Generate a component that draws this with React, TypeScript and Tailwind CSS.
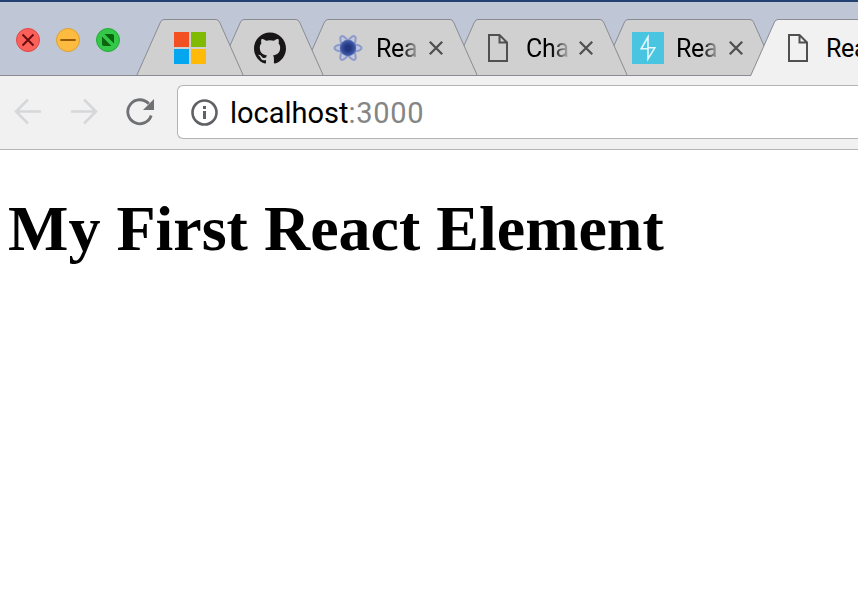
import type { ReactNode } from "react";
import { SiGithub } from "react-icons/si";

function TrafficLights() {
  return (
    <div className="flex gap-4 pl-4 pt-[26px]">
      <svg className="size-6" viewBox="0 0 24 24">
        <circle cx="12" cy="12" r="11.5" fill="#fc605b" stroke="#df4744" />
        <path d="M6.5 6.5l11 11M17.5 6.5l-11 11" stroke="#6b0d0a" strokeWidth="2" />
      </svg>
      <svg className="size-6" viewBox="0 0 24 24">
        <circle cx="12" cy="12" r="11.5" fill="#fdbc40" stroke="#de9f34" />
        <path d="M4.3 12h15.4" stroke="#985a08" strokeWidth="2" />
      </svg>
      <svg className="size-6" viewBox="0 0 24 24">
        <circle cx="12" cy="12" r="11.5" fill="#33c84a" stroke="#27aa35" />
        <path d="M8.500 6H16a2 2 0 0 1 2 2v7.500zM6 8.500V16a2 2 0 0 0 2 2h7.500z" fill="#0a650d" />
      </svg>
    </div>
  );
}

function TabShape({ width, active = false }: { width: number; active?: boolean }) {
  const w = width;
  return (
    <svg className="absolute inset-0 h-[57px] w-full" viewBox={`0 0 ${w} 57`}>
      <path
        d={`M0.500 57L24.500 3Q25.700 0.500 28 0.500H${w - 28}Q${w - 25.700} 0.500 ${w - 24.500} 3L${w - 0.500} 57`}
        fill={active ? "#f1f1f1" : "#d0d0d0"}
        stroke="#8b8b93"
      />
      {!active && <path d={`M0 56.500H${w}`} stroke="#8b8b93" />}
    </svg>
  );
}

function Close() {
  return (
    <svg className="ml-2.5 mt-2 size-4" viewBox="0 0 16 16">
      <path d="M1.800 1.800l12.400 12.400M14.200 1.800L1.800 14.200" stroke="#505050" strokeWidth="2.300" />
    </svg>
  );
}

function FileIcon() {
  return (
    <svg className="size-8" viewBox="0 0 32 32">
      <path d="M7 3h10.500l7.500 7.500V29H7zM17.500 3v7.500H25" fill="none" stroke="#505050" strokeWidth="2" />
    </svg>
  );
}

function MicrosoftIcon() {
  return (
    <div className="grid size-8 grid-cols-2 gap-0.5">
      <i className="bg-[#f35022]" />
      <i className="bg-[#80bb03]" />
      <i className="bg-[#05a6f0]" />
      <i className="bg-[#ffba08]" />
    </div>
  );
}

function ReactIcon() {
  return (
    <svg className="size-8" viewBox="0 0 32 32">
      <defs>
        <radialGradient id="core">
          <stop offset="0.3" stopColor="#22367f" />
          <stop offset="0.75" stopColor="#3650a0" />
          <stop offset="1" stopColor="#5f73b4" />
        </radialGradient>
      </defs>
      <g fill="#c3c9dd" stroke="#8e9bcb" strokeWidth="2">
        <ellipse cx="16" cy="16" rx="13.500" ry="4.200" />
        <ellipse cx="16" cy="16" rx="13.500" ry="4.200" transform="rotate(60 16 16)" />
        <ellipse cx="16" cy="16" rx="13.500" ry="4.200" transform="rotate(120 16 16)" />
      </g>
      <circle cx="16" cy="16" r="8.300" fill="url(#core)" />
    </svg>
  );
}

function BoltIcon() {
  return (
    <svg className="size-8 bg-[#4ac5e1]" viewBox="0 0 32 32">
      <path d="M16 5L9.200 16.800H16V27l6.800-11.200H16z" fill="none" stroke="#e4f8fc" strokeWidth="1.600" />
    </svg>
  );
}

function Tab({ icon, title }: { icon: ReactNode; title: string }) {
  return (
    <div className="relative flex h-[57px] w-[178px] pl-[32px] pt-[13px]">
      <TabShape width={178} />
      <div className="relative flex">
        {icon}
        <div className="ml-3 h-8 w-[42px] whitespace-nowrap text-[25px] leading-[34px] tracking-[-0.3px] text-black [mask-image:linear-gradient(to_right,black_60%,transparent_108%)]">
          {title}
        </div>
        <Close />
      </div>
    </div>
  );
}

function PinnedTab({ icon }: { icon: ReactNode }) {
  return (
    <div className="relative flex h-[57px] w-[108px] justify-center pt-[13px]">
      <TabShape width={108} />
      <div className="relative">{icon}</div>
    </div>
  );
}

function TabStrip() {
  return (
    <div className="flex h-[76px] overflow-hidden border-t-2 border-[#234272] bg-[#bfc7d6]">
      <div className="w-[136px] shrink-0 border-b border-[#8b8b93]">
        <TrafficLights />
      </div>
      <div className="isolate flex shrink-0 pt-[17px]">
        <div className="z-50">
          <PinnedTab icon={<MicrosoftIcon />} />
        </div>
        <div className="z-40 -ml-7">
          <PinnedTab icon={<SiGithub className="size-8 text-[#181616]" />} />
        </div>
        <div className="z-30 -ml-6">
          <Tab icon={<ReactIcon />} title="Rea" />
        </div>
        <div className="z-20 -ml-7">
          <Tab icon={<FileIcon />} title="Cha" />
        </div>
        <div className="z-10 -ml-7">
          <Tab icon={<BoltIcon />} title="Rea" />
        </div>
        <div className="relative z-[60] -ml-7 flex h-[57px] w-[178px] pl-[32px] pt-[13px]">
          <TabShape width={178} active />
          <div className="relative flex">
            <FileIcon />
            <span className="ml-3 text-[25px] leading-[34px] tracking-[-0.3px] text-black">Rea</span>
          </div>
        </div>
      </div>
    </div>
  );
}

function Toolbar() {
  return (
    <div className="flex h-[74px] border-b border-[#b5b5b7] bg-[#f1f1f1] pt-[9px]">
      <div className="flex w-[177px] shrink-0 gap-6 pl-3 pt-[11px]">
        <svg className="size-8" viewBox="0 0 32 32" fill="none" stroke="#d6d7d9" strokeWidth="2.500">
          <path d="M29 15.500H4.500M16 3.500L4 15.500l12 12" />
        </svg>
        <svg className="size-8" viewBox="0 0 32 32" fill="none" stroke="#d6d7d9" strokeWidth="2.500">
          <path d="M3 15.500h24.500M16 3.500l12 12-12 12" />
        </svg>
        <svg className="size-8" viewBox="0 0 32 32">
          <path d="M27.200 19.500A12 12 0 1 1 24.800 7.800" fill="none" stroke="#6f7174" strokeWidth="2.800" />
          <path d="M30 3v11H19z" fill="#6f7174" />
        </svg>
      </div>
      <div className="flex h-[54px] flex-1 rounded-l-md border border-r-0 border-[#b3b3b5] bg-white pl-3 pt-[12px]">
        <svg className="size-7" viewBox="0 0 28 28">
          <circle cx="14.500" cy="14.500" r="12" fill="none" stroke="#5f6165" strokeWidth="2.600" />
          <path d="M13 8h3v3h-3zM13 13h3v8h-3z" fill="#5f6165" />
        </svg>
        <span className="ml-[12px] text-[29px] leading-[30px] text-black">
          localhost<span className="tracking-[0.7px] text-[#858585]">:3000</span>
        </span>
      </div>
    </div>
  );
}

export default function App() {
  return (
    <div className="h-[596px] w-[858px] overflow-hidden bg-white font-[Roboto,sans-serif]">
      <TabStrip />
      <Toolbar />
      <h1 className="whitespace-nowrap pl-2 pt-[42px] font-['Liberation_Serif',serif] text-[64px] font-bold leading-[74px] text-black">
        My First React Element
      </h1>
    </div>
  );
}
